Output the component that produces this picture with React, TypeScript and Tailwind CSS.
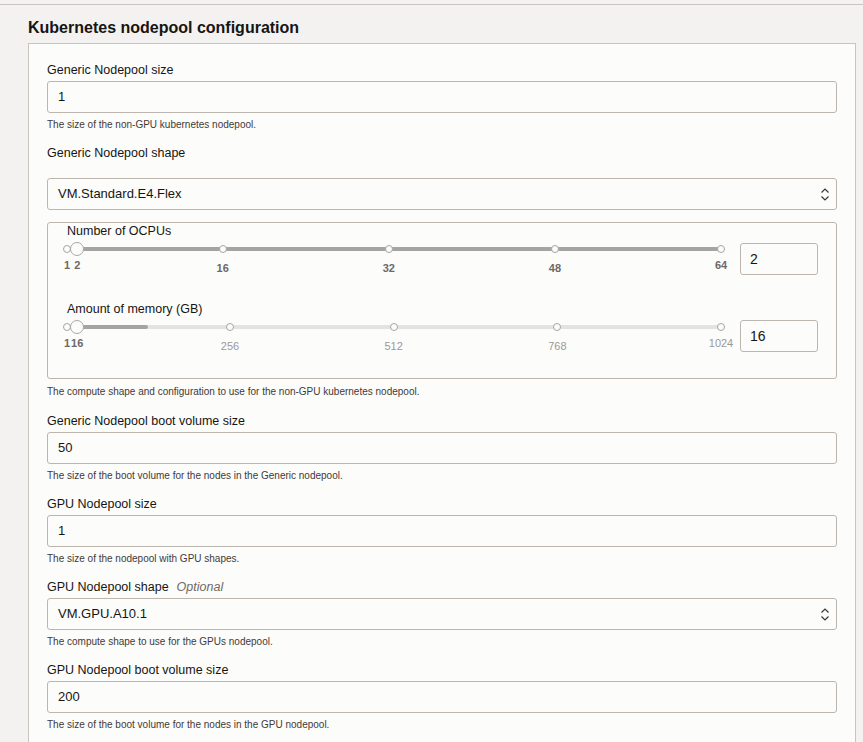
import React from "react";

const FONT = "font-['Liberation_Sans',Arial,sans-serif]";

type Tick = { v: number; label: string; y: "end" | "mid"; tone: "bold" | "light" };

const Field = ({
  label,
  value,
  help,
  optional,
}: {
  label: string;
  value: string;
  help: string;
  optional?: boolean;
}) => (
  <div className="mb-[13px]">
    <div className="mb-[3px] text-[12.5px] leading-[16px] text-[#161513]">
      {label}
      {optional ? <span className="ml-[8px] italic text-[#6f6964]">Optional</span> : null}
    </div>
    <div className="flex h-[32px] items-center rounded-[3px] border border-[#bcb6af] bg-[#fcfcfb] px-[10px] text-[13px] text-[#161513]">
      {value}
    </div>
    <div className="mt-[5px] text-[10px] leading-[14px] text-[#3f3a37]">{help}</div>
  </div>
);

const SelectBox = ({ value }: { value: string }) => (
  <div className="flex h-[32px] items-center justify-between rounded-[3px] border border-[#bcb6af] bg-[#fcfcfb] pl-[10px] pr-[6px] text-[13px] text-[#161513]">
    <span>{value}</span>
    <svg width="10" height="15" viewBox="0 0 10 15" fill="none" stroke="#3a3633" strokeWidth="1.2">
      <path d="M1.5 5.5 L5 2 L8.5 5.5" />
      <path d="M1.5 9.5 L5 13 L8.5 9.5" />
    </svg>
  </div>
);

const Slider = ({
  min,
  max,
  value,
  fill,
  light,
  ticks,
}: {
  min: number;
  max: number;
  value: number;
  fill: number;
  light: boolean;
  ticks: Tick[];
}) => {
  const W = 654;
  const pos = (v: number) => ((v - min) / (max - min)) * W;
  return (
    <div className="relative h-full w-[654px]">
      <div
        className={`absolute left-0 top-[8px] h-[4px] w-[654px] rounded-full ${light ? "bg-[#e4e3e2]" : "bg-[#a5a4a3]"}`}
      />
      <div className="absolute left-0 top-[8px] h-[4px] rounded-full bg-[#a5a4a3]" style={{ width: fill }} />
      {ticks.map((t) => (
        <React.Fragment key={t.v}>
          <div
            className="absolute top-[6px] h-[8px] w-[8px] -translate-x-1/2 rounded-full border border-[#a8a6a4] bg-[#fcfcfb]"
            style={{ left: pos(t.v) }}
          />
          <div
            className={`absolute -translate-x-1/2 text-[11px] leading-[14px] ${
              t.tone === "bold" ? "font-bold text-[#6c6966]" : "text-[#9c9896]"
            } ${t.y === "end" ? "top-[19px]" : "top-[22px]"}`}
            style={{ left: pos(t.v) }}
          >
            {t.label}
          </div>
        </React.Fragment>
      ))}
      <div
        className="absolute top-[3px] h-[14px] w-[14px] -translate-x-1/2 rounded-full border border-[#aaa8a6] bg-[#fcfcfb]"
        style={{ left: pos(value) }}
      />
    </div>
  );
};

const NumBox = ({ value }: { value: string }) => (
  <div className="flex h-[32px] w-[78px] items-center rounded-[3px] border border-[#bcb6af] bg-[#fcfcfb] px-[9px] text-[14px] text-[#161513]">
    {value}
  </div>
);

export default function App() {
  return (
    <div className={`min-h-screen bg-[#f3f2f0] pt-[4px] ${FONT}`}>
      <div className="border-t border-[#c8c4be] pl-[28px] pr-[7px]">
        <h2 className="pb-[5px] pt-[13px] text-[16px] font-bold leading-[20px] text-[#161513]">
          Kubernetes nodepool configuration
        </h2>
        <div className="border border-b-0 border-[#c8c4be] bg-[#fcfcfb] px-[18px] pb-[24px] pt-[18px]">
          <Field
            label="Generic Nodepool size"
            value="1"
            help="The size of the non-GPU kubernetes nodepool."
          />

          <div className="mb-[14px]">
            <div className="mb-[17px] text-[12.5px] leading-[16px] text-[#161513]">Generic Nodepool shape</div>
            <SelectBox value="VM.Standard.E4.Flex" />

            <div className="mt-[12px] rounded-[3px] border border-[#bcb6af] pb-[1px] pl-[19px] pr-[18px]">
              <div className="text-[12.5px] leading-[16px] text-[#161513]">Number of OCPUs</div>
              <div className="flex h-[62px] items-start gap-[19px]">
                <Slider
                  min={1}
                  max={64}
                  value={2}
                  fill={654}
                  light={false}
                  ticks={[
                    { v: 1, label: "1", y: "end", tone: "bold" },
                    { v: 2, label: "2", y: "end", tone: "bold" },
                    { v: 16, label: "16", y: "mid", tone: "bold" },
                    { v: 32, label: "32", y: "mid", tone: "bold" },
                    { v: 48, label: "48", y: "mid", tone: "bold" },
                    { v: 64, label: "64", y: "end", tone: "bold" },
                  ]}
                />
                <div className="mt-[4px]">
                  <NumBox value="2" />
                </div>
              </div>

              <div className="text-[12.5px] leading-[16px] text-[#161513]">Amount of memory (GB)</div>
              <div className="flex h-[60px] items-start gap-[19px]">
                <Slider
                  min={1}
                  max={1024}
                  value={16}
                  fill={81}
                  light={true}
                  ticks={[
                    { v: 1, label: "1", y: "end", tone: "bold" },
                    { v: 17, label: "16", y: "end", tone: "bold" },
                    { v: 256, label: "256", y: "mid", tone: "light" },
                    { v: 512, label: "512", y: "mid", tone: "light" },
                    { v: 768, label: "768", y: "mid", tone: "light" },
                    { v: 1024, label: "1024", y: "end", tone: "light" },
                  ]}
                />
                <div className="mt-[3px]">
                  <NumBox value="16" />
                </div>
              </div>
            </div>

            <div className="mt-[6px] text-[10px] leading-[14px] text-[#3f3a37]">
              The compute shape and configuration to use for the non-GPU kubernetes nodepool.
            </div>
          </div>

          <Field
            label="Generic Nodepool boot volume size"
            value="50"
            help="The size of the boot volume for the nodes in the Generic nodepool."
          />
          <Field label="GPU Nodepool size" value="1" help="The size of the nodepool with GPU shapes." />

          <div className="mb-[13px]">
            <div className="mb-[3px] text-[12.5px] leading-[16px] text-[#161513]">
              GPU Nodepool shape
              <span className="ml-[8px] italic text-[#6f6964]">Optional</span>
            </div>
            <SelectBox value="VM.GPU.A10.1" />
            <div className="mt-[5px] text-[10px] leading-[14px] text-[#3f3a37]">
              The compute shape to use for the GPUs nodepool.
            </div>
          </div>

          <Field
            label="GPU Nodepool boot volume size"
            value="200"
            help="The size of the boot volume for the nodes in the GPU nodepool."
          />
        </div>
      </div>
    </div>
  );
}
